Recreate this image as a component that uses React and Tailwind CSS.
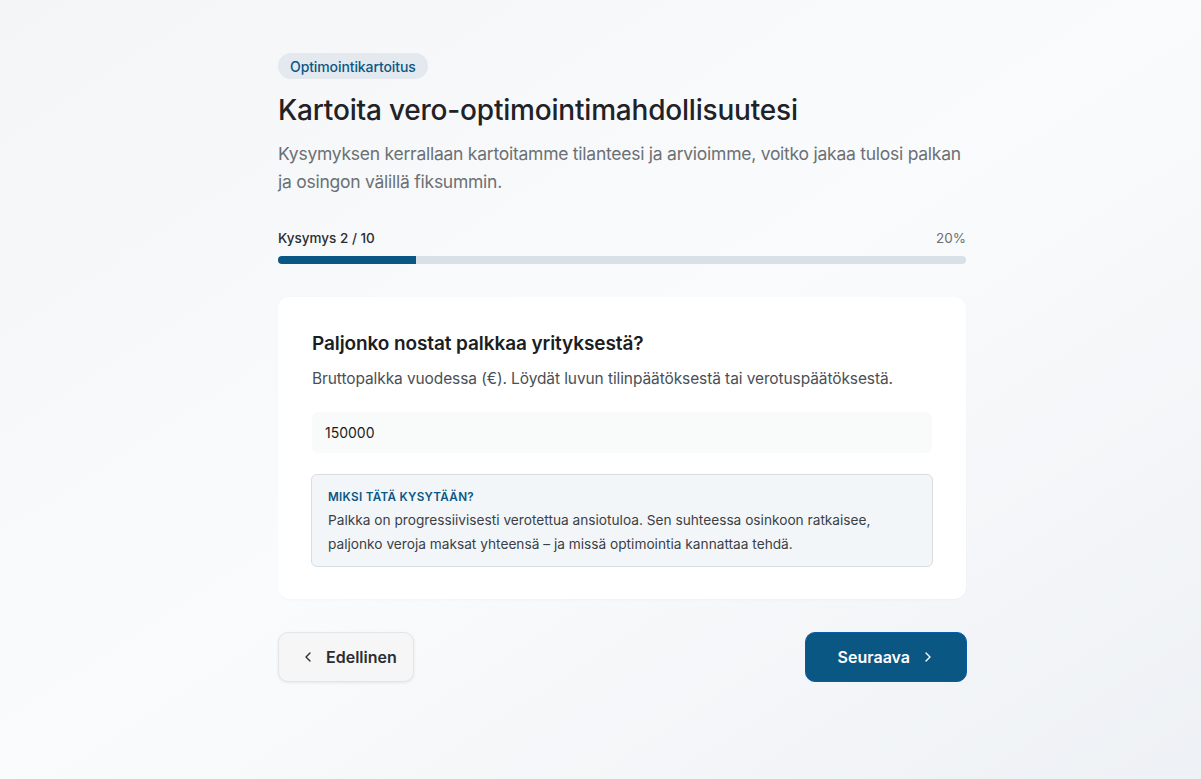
import React from "react";

function ChevronLeft() {
  return (
    <svg width="16" height="16" viewBox="0 0 24 24" fill="none" stroke="currentColor" strokeWidth="2" strokeLinecap="round" strokeLinejoin="round">
      <path d="M15 18l-6-6 6-6" />
    </svg>
  );
}
function ChevronRight() {
  return (
    <svg width="16" height="16" viewBox="0 0 24 24" fill="none" stroke="currentColor" strokeWidth="2" strokeLinecap="round" strokeLinejoin="round">
      <path d="M9 18l6-6-6-6" />
    </svg>
  );
}

export default function App() {
  return (
    <div
      className="min-h-[779px] w-full bg-gradient-to-br from-[#f3f5f7] via-[#fafbfc] to-[#eef1f5] text-[#1f2328]"
      style={{ fontFamily: "Inter, 'Noto Sans', sans-serif" }}
    >
      <div className="ml-[278px] w-[688px] pt-[53px] pb-16">
        <span className="inline-flex h-[26px] items-center rounded-full bg-[#e3e9ef] px-3 text-[14px] font-medium tracking-[-0.1px] text-[#0b5784]">
          Optimointikartoitus
        </span>
        <h1 className="mt-[13px] text-[28px] leading-9 font-medium tracking-[-0.2px] text-[#1f2226]">
          Kartoita vero-optimointimahdollisuutesi
        </h1>
        <p className="mt-3 text-[17.5px] leading-7 tracking-[-0.25px] text-[#6b7075]">
          Kysymyksen kerrallaan kartoitamme tilanteesi ja arvioimme, voitko jakaa tulosi palkan ja osingon välillä fiksummin.
        </p>

        <div className="mt-8 flex items-center justify-between text-[13.5px] leading-5">
          <span className="font-medium text-[#2a2e33]">Kysymys 2 / 10</span>
          <span className="text-[#6b7075]">20%</span>
        </div>
        <div className="mt-2 h-2 w-full overflow-hidden rounded-full bg-[#d9e0e7]">
          <div className="h-full bg-[#0b5784]" style={{ width: "20%" }} />
        </div>

        <div className="mt-[33px] rounded-xl bg-white px-[34px] pt-[33px] pb-8 shadow-[0_1px_2px_rgba(15,23,42,0.03)]">
          <h2 className="text-[19px] leading-7 font-semibold tracking-[-0.1px] text-[#1a1d21]">
            Paljonko nostat palkkaa yrityksestä?
          </h2>
          <p className="mt-[9px] text-[15.5px] leading-6 tracking-[-0.1px] text-[#4a4f55]">
            Bruttopalkka vuodessa (€). Löydät luvun tilinpäätöksestä tai verotuspäätöksestä.
          </p>
          <div className="mt-[21px] flex h-[41px] items-center rounded-md bg-[#f9fafa] px-[13px] text-[14px] text-[#1a1d21]">
            150000
          </div>
          <div className="mt-[21px] -mx-px rounded-md border border-[#d7dde3] bg-[#f3f6f9] px-4 pt-[14px] pb-[10px]">
            <div className="text-[11.7px] leading-4 font-semibold tracking-[0.3px] text-[#0b5784]">
              MIKSI TÄTÄ KYSYTÄÄN?
            </div>
            <p className="mt-[3px] text-[13.7px] leading-6 text-[#3a3f45]">
              Palkka on progressiivisesti verotettua ansiotuloa. Sen suhteessa osinkoon ratkaisee, paljonko veroja maksat yhteensä – ja missä optimointia kannattaa tehdä.
            </p>
          </div>
        </div>

        <div className="mt-[33px] flex items-center justify-between">
          <button className="flex h-[50px] items-center gap-[10px] rounded-[10px] border border-[#e3e5e8] bg-[#f6f6f6] pl-[21px] pr-4 text-[16px] font-semibold text-[#2a2e33] shadow-[0_1px_3px_rgba(0,0,0,0.08)]">
            <ChevronLeft />
            Edellinen
          </button>
          <button className="-mr-px flex h-[50px] items-center gap-[10px] rounded-[10px] border border-[#0a5bb0] bg-[#0b5784] pl-8 pr-[30px] text-[16px] font-semibold text-white">
            Seuraava
            <ChevronRight />
          </button>
        </div>
      </div>
    </div>
  );
}
